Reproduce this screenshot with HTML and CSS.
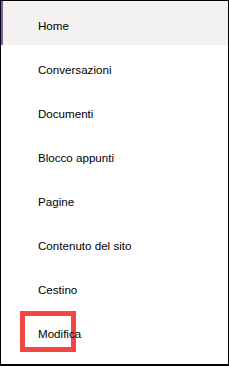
FILE: index.html
```
<!DOCTYPE html>
<html lang="it">
<head>
    <meta charset="UTF-8">
    <meta name="viewport" content="width=device-width, initial-scale=1.0">
    <title>Navigazione sito</title>
    <link rel="stylesheet" href="styles.css">
</head>
<body>
    <nav class="quick-launch">
        <a class="nav-item selected" href="#">Home</a>
        <a class="nav-item" href="#">Conversazioni</a>
        <a class="nav-item" href="#">Documenti</a>
        <a class="nav-item" href="#">Blocco appunti</a>
        <a class="nav-item" href="#">Pagine</a>
        <a class="nav-item" href="#">Contenuto del sito</a>
        <a class="nav-item" href="#">Cestino</a>
        <a class="nav-item edit" href="#">
            <span class="highlight"></span>
            <span class="label">Modifica</span>
        </a>
    </nav>
</body>
</html>
```

FILE: styles.css
```
body {
    margin: 0;
    background-color: #fff;
    font-family: "Liberation Sans", Arial, sans-serif;
}

.quick-launch {
    display: flex;
    flex-direction: column;
    width: 229px;
    height: 366px;
    box-sizing: border-box;
    border: 1px solid #000;
    border-bottom-width: 2px;
}

.nav-item {
    display: block;
    height: 44px;
    box-sizing: border-box;
    padding: 6px 0 0 35px;
    line-height: 38px;
    font-size: 11.6px;
    color: #000;
    text-decoration: none;
    border-left: 2px solid transparent;
}

.nav-item.selected {
    background-color: #f3f2f1;
    border-left-color: #7b5fb0;
}

.edit {
    position: relative;
}

.edit .highlight {
    position: absolute;
    left: 17px;
    top: 2px;
    width: 56px;
    height: 41px;
    box-sizing: border-box;
    border: 5px solid #f44545;
}

.edit .label {
    position: relative;
}
```
